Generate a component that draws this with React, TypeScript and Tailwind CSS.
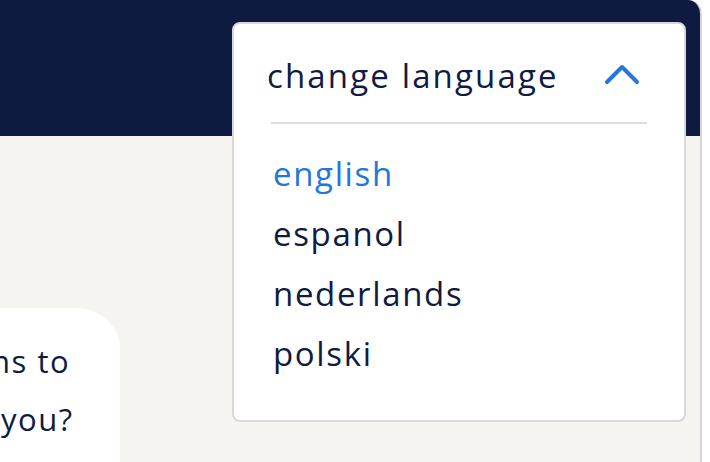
import React from "react";

export default function App() {
  const font = { fontFamily: "'Open Sans', 'Noto Sans', sans-serif" };
  return (
    <div className="w-[710px] h-[462px] bg-white overflow-hidden" style={font}>
      <div className="relative w-[702px] h-[462px] bg-[#f5f4f0] border-r-2 border-[#d6d6d6] rounded-tr-[14px] overflow-hidden flex flex-col">
        <div className="h-[136px] bg-[#0e1a40] shrink-0" />
        <div className="flex-1 pt-[172px]">
          <div className="w-[120px] h-[200px] bg-white rounded-tr-[42px] rounded-br-[42px] pt-[24px] text-[31px] leading-[58px] tracking-[0.05em] text-[#0f1b42] overflow-hidden">
            <div className="ml-[-9px] whitespace-nowrap">ns to</div>
            <div className="ml-[1px] whitespace-nowrap">you?</div>
          </div>
        </div>

        <div className="absolute left-[232px] top-[22px] w-[454px] h-[400px] bg-white border-2 border-[#d8d8d8] rounded-[8px]">
          <div className="flex items-center justify-between pl-[33px] pr-[44px] pt-[6px] h-[98px]">
            <span className="text-[33px] leading-[40px] tracking-[0.065em] text-[#0f1b42]">change language</span>
            <svg width="36" height="22" viewBox="0 0 36 22" fill="none" className="mt-[-4px]">
              <path d="M3 19 L18 4 L33 19" stroke="#2475de" strokeWidth="4" strokeLinecap="round" strokeLinejoin="round" />
            </svg>
          </div>
          <div className="mx-[37px] h-[2px] bg-[#dcdcdc]" />
          <ul className="pl-[39px] pt-[20px] text-[33px] leading-[60px] tracking-[0.05em] text-[#0f1b42]">
            <li className="text-[#2475de]">english</li>
            <li>espanol</li>
            <li>nederlands</li>
            <li>polski</li>
          </ul>
        </div>
      </div>
    </div>
  );
}
